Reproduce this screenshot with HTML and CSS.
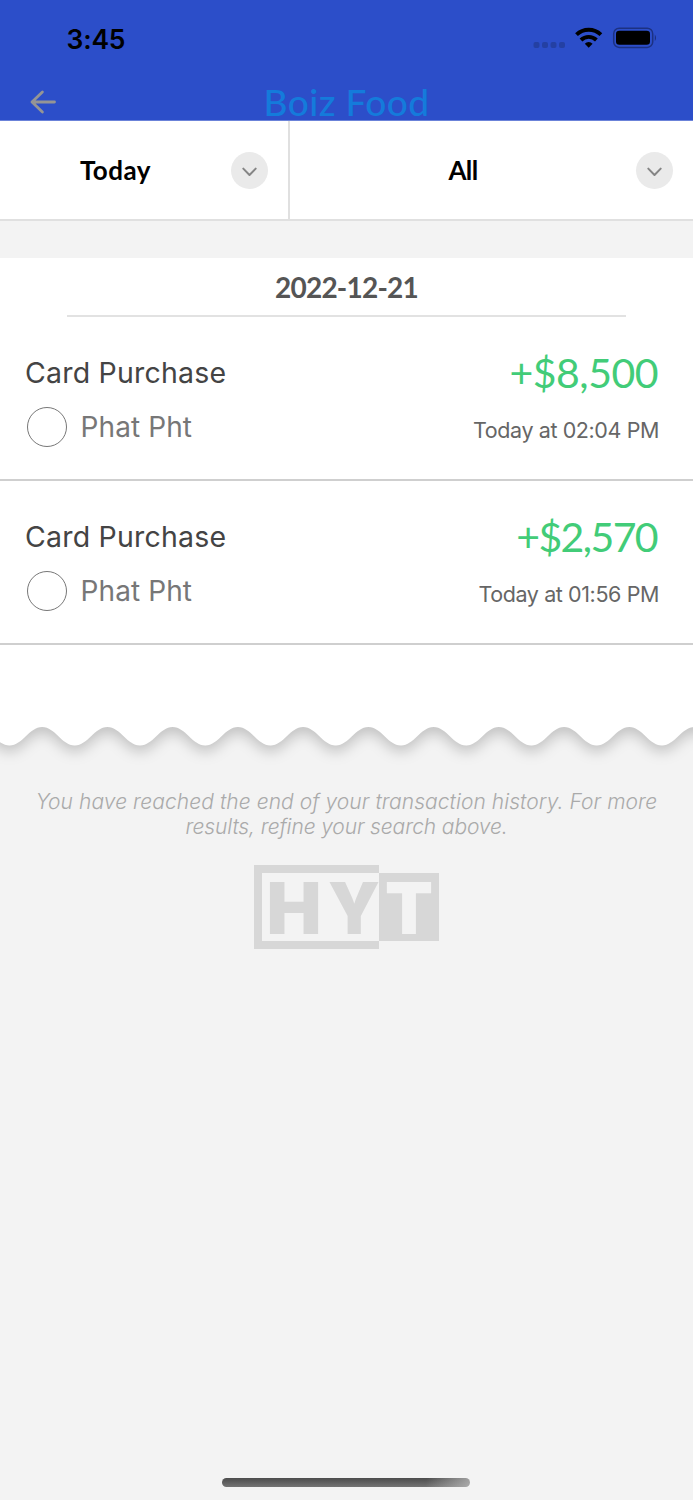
FILE: index.html
```html
<!DOCTYPE html>
<html lang="en">
<head>
<meta charset="utf-8">
<title>Boiz Food</title>
<link rel="stylesheet" href="styles.css">
</head>
<body>
<div class="screen">
  <header class="header">
    <div class="status">
      <span class="time">3:45</span>
      <svg class="status-icons" width="126" height="24" viewBox="0 0 126 24">
        <g fill="#2440a3"><rect x="3.500" y="16" width="6" height="6" rx="2"/><rect x="12" y="16" width="6" height="6" rx="2"/><rect x="20.500" y="16" width="6" height="6" rx="2"/><rect x="29" y="16" width="6" height="6" rx="2"/></g>
        <g fill="none" stroke="#000" stroke-width="3.900"><path d="M46.500 8.700a17.500 17.500 0 0 1 24.400 0"/><path d="M51 14a11 11 0 0 1 15.400 0"/></g>
        <path d="M58.700 21.800l-3.900-4.100a5.600 5.600 0 0 1 7.800 0z"/>
        <rect x="83.700" y="2.200" width="39" height="19.200" rx="5.500" fill="none" stroke="#1c3182" stroke-width="1.500"/>
        <rect x="86" y="4.800" width="34" height="14" rx="3.300"/>
        <path d="M124.800 8.500q2.600 3.300 0 6.600z" fill="#1c3182"/>
      </svg>
    </div>
    <div class="nav">
      <svg class="back" width="26" height="24" viewBox="0 0 26 24"><path d="M24.500 12H2M12.400 2L2 12l10.400 10" fill="none" stroke="#959595" stroke-width="2.800" stroke-linecap="round" stroke-linejoin="round"/></svg>
      <h1 class="title">Boiz Food</h1>
    </div>
  </header>
  <div class="filters">
    <div class="filter filter-date"><span class="filter-label today">Today</span><span class="chevron"><svg width="16" height="10" viewBox="0 0 16 10"><path d="M1.300 1.600L7.500 8l6.200-6.400" fill="none" stroke="#858585" stroke-width="2" stroke-linecap="round" stroke-linejoin="round"/></svg></span></div>
    <div class="filter filter-type"><span class="filter-label all">All</span><span class="chevron"><svg width="16" height="10" viewBox="0 0 16 10"><path d="M1.300 1.600L7.500 8l6.200-6.400" fill="none" stroke="#858585" stroke-width="2" stroke-linecap="round" stroke-linejoin="round"/></svg></span></div>
  </div>
  <main class="sheet">
    <h2 class="date"><span>2022-12-21</span></h2>
    <article class="row">
      <div class="line"><span class="kind">Card Purchase</span><span class="amount">+$8,500</span></div>
      <div class="line second"><span class="person"><i class="avatar"></i><span class="name">Phat Pht</span></span><span class="when">Today at 02:04 PM</span></div>
    </article>
    <article class="row">
      <div class="line"><span class="kind">Card Purchase</span><span class="amount amount-b">+$2,570</span></div>
      <div class="line second"><span class="person"><i class="avatar"></i><span class="name">Phat Pht</span></span><span class="when when-b">Today at 01:56 PM</span></div>
    </article>
  </main>
  <svg class="wave" width="693" height="60" viewBox="0 0 693 60">
    <path d="M-55.700 -20V35.500c13 0 19.600-18.500 32.620-18.500s19.600 18.500 32.620 18.500 19.600-18.500 32.620-18.500 19.600 18.500 32.620 18.500 19.600-18.500 32.620-18.500 19.600 18.500 32.620 18.500 19.600-18.500 32.620-18.500 19.600 18.500 32.620 18.500 19.600-18.500 32.620-18.500 19.600 18.500 32.620 18.500 19.600-18.500 32.620-18.500 19.600 18.500 32.620 18.500 19.600-18.500 32.620-18.500 19.600 18.500 32.620 18.500 19.600-18.500 32.620-18.500 19.600 18.500 32.620 18.500 19.600-18.500 32.620-18.500 19.600 18.500 32.620 18.500 19.600-18.500 32.620-18.500 19.600 18.500 32.620 18.500 19.600-18.500 32.620-18.500 19.600 18.500 32.620 18.500 19.600-18.500 32.620-18.500 19.600 18.500 32.620 18.500V-20z" fill="#fff"/>
  </svg>
  <footer class="end">
    <p class="note"><span class="note-a">You have reached the end of your transaction history. For more</span><br><span class="note-b">results, refine your search above.</span></p>
    <svg class="logo" width="186" height="84" viewBox="0 0 186 84">
      <path d="M125 4H4v76h121" fill="none" stroke="#d7d7d7" stroke-width="8"/>
      <path d="M125 8h60v68h-60z" fill="#d7d7d7"/>
      <g class="logo-text">
        <text x="12.500" y="68.500" textLength="55" lengthAdjust="spacingAndGlyphs" fill="#d7d7d7">H</text>
        <text x="74" y="68.500" textLength="52" lengthAdjust="spacingAndGlyphs" fill="#d7d7d7">Y</text>
        <text x="131" y="68.500" textLength="48" lengthAdjust="spacingAndGlyphs" fill="#f3f3f3">T</text>
      </g>
    </svg>
  </footer>
  <div class="home"></div>
</div>
</body>
</html>
```
FILE: styles.css
```css
* { box-sizing: border-box; }
body { margin: 0; background: #f3f3f3; }
h1, h2, p { margin: 0; font-weight: 400; }
svg { display: block; flex: none; }
.screen { display: flex; flex-direction: column; width: 693px; height: 1500px; overflow: hidden; font-family: Lato, "Open Sans", sans-serif; }
.header { height: 121px; background: #2c4ec9; border-bottom: 1px solid #6b83d9; flex: none; }
.status { display: flex; justify-content: space-between; align-items: center; height: 76px; padding: 0 37px 0 66.500px; }
.time { font: 600 26.500px/30px Inter, sans-serif; letter-spacing: -.2px; padding-top: 1px; }
.nav { display: grid; grid-template-columns: 30px 1fr 30px; align-items: center; height: 52px; padding: 0 30px; }
.title { font-size: 37px; line-height: 44px; font-weight: 500; letter-spacing: .4px; text-align: center; color: #147bdb; white-space: nowrap; }
.filters { display: flex; height: 100px; flex: none; background: #fff; border-bottom: 2px solid #e0e0e0; }
.filter { display: grid; grid-template-columns: 1fr 37px; align-items: center; padding-right: 20px; padding-top: 1px; }
.filter-date { width: 290px; border-right: 2px solid #e0e0e0; }
.filter-type { flex: 1; }
.filter-label { font-size: 26px; line-height: 36px; font-weight: 700; text-align: center; padding-bottom: 1px; }
.today { letter-spacing: .5px; }
.all { letter-spacing: -.6px; }
.chevron { display: grid; place-items: center; width: 37px; height: 37px; border-radius: 50%; background: #eaeaea; }
.chevron svg { margin-top: 2px; }
.sheet { margin-top: 37px; background: #fff; height: 452px; flex: none; }
.date { display: grid; place-items: center; height: 59px; margin: 0 67px; border-bottom: 2px solid #e2e2e2; font-size: 28px; font-weight: 700; letter-spacing: -.8px; color: #555; }
.row { height: 164px; padding: 29px 34px 0 25px; border-bottom: 2px solid #cfcfcf; }
.line { display: flex; justify-content: space-between; align-items: center; height: 53px; white-space: nowrap; }
.second { height: 56px; }
.kind { font: 400 28.500px/36px Inter, sans-serif; letter-spacing: .2px; color: #444; }
.amount { font-size: 41px; letter-spacing: -.5px; margin-right: 1px; color: #42cc78; }
.amount-b { letter-spacing: -1.600px; margin-right: 2px; }
.person { display: flex; align-items: center; gap: 13.500px; }
.avatar { width: 40px; height: 40px; margin-left: 2px; border: 1px solid #777; border-radius: 50%; }
.name { font: 400 28px/36px Inter, sans-serif; letter-spacing: .1px; color: #777; }
.when { font: 400 21.500px/28px Inter, sans-serif; letter-spacing: -.4px; color: #666; padding-top: 5px; }
.wave { overflow: hidden; }
.wave path { filter: drop-shadow(0 6px 7px rgba(0,0,0,.2)); }
.end { display: flex; flex-direction: column; align-items: center; padding-top: 19px; }
.note { font: italic 300 21px/25px Inter, sans-serif; text-align: center; color: #aaa; white-space: nowrap; }
.note-a { letter-spacing: .06px; }
.note-b { letter-spacing: -.13px; }
.logo { margin-top: 26px; }
.logo-text { font: 900 71px Inter, sans-serif; }
.home { width: 248px; height: 9px; margin: auto auto 13px 222px; border-radius: 5px; background: linear-gradient(100deg, transparent 82%, rgba(190,190,190,.75)), linear-gradient(#4c4c4c, #737373); }
```
